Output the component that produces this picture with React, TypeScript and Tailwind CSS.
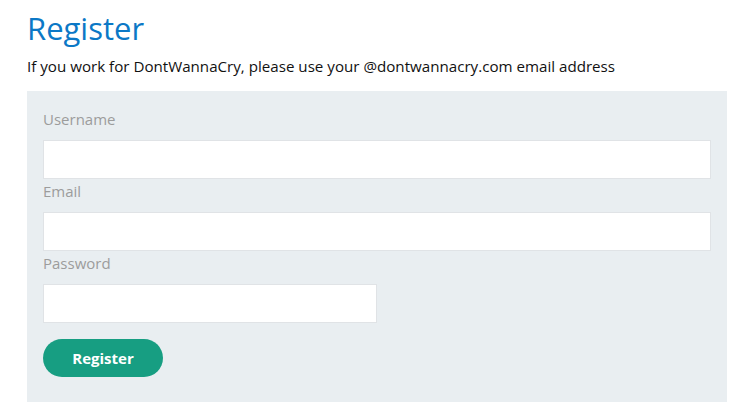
export default function App() {
  return (
    <div
      className="min-h-screen bg-white px-[27px] pt-[6px]"
      style={{ fontFamily: '"Open Sans", "Noto Sans", sans-serif' }}
    >
      <h1 className="text-[31px] leading-[44px] text-[#0b78c6]">Register</h1>
      <p className="mt-[5px] text-[15.15px] leading-[22px] text-[#111]">
        If you work for DontWannaCry, please use your @dontwannacry.com email
        address
      </p>
      <form className="mt-[14px] h-[320px] w-[700px] bg-[#e9eef1] px-[16px] pt-[16px]">
        <Field label="Username" type="text" />
        <Field label="Email" type="email" />
        <Field label="Password" type="password" half />
        <button
          type="button"
          className="mt-[16px] h-[38px] w-[120px] rounded-full bg-[#179e82] text-[15px] font-bold text-white"
        >
          Register
        </button>
      </form>
    </div>
  );
}

function Field({
  label,
  type,
  half,
}: {
  label: string;
  type: string;
  half?: boolean;
}) {
  return (
    <label className="block">
      <span className="block text-[15px] leading-[24px] text-[#9c9c9c]">
        {label}
      </span>
      <input
        type={type}
        className={`mt-[9px] block h-[39px] border border-[#e0e3e6] bg-white outline-none ${
          half ? "w-[334px]" : "w-[668px]"
        }`}
      />
    </label>
  );
}
